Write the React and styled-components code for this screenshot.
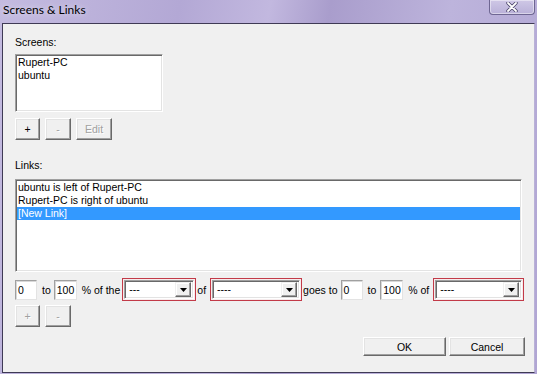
import React from "react";
import styled, { createGlobalStyle } from "styled-components";

const GlobalStyle = createGlobalStyle`
  html, body {
    margin: 0;
    padding: 0;
  }
  body {
    width: 537px;
    height: 374px;
    overflow: hidden;
    background: #b7aed6;
  }
`;

const Window = styled.div`
  width: 537px;
  height: 374px;
  display: flex;
  flex-direction: column;
  box-sizing: border-box;
  background: linear-gradient(
    100deg,
    #c4bbe0 0%,
    #b3a8d5 30%,
    #c2b8df 45%,
    #a99dcc 55%,
    #bdb4dc 75%,
    #b0a5d3 100%
  );
  font-family: "Liberation Sans", Arial, sans-serif;
  font-size: 10.5px;
  color: #000;
`;

const TitleBar = styled.div`
  height: 23px;
  display: flex;
  justify-content: space-between;
  align-items: flex-start;
  flex-shrink: 0;
`;

const Title = styled.div`
  padding: 3px 0 0 3px;
  font-family: Lato, "Liberation Sans", sans-serif;
  font-size: 12px;
  line-height: 14px;
  text-shadow: 0 0 6px rgba(255, 255, 255, 0.7);
`;

const CloseButton = styled.div`
  width: 46px;
  height: 15px;
  margin-right: 2px;
  box-sizing: border-box;
  border: 1px solid #6e6692;
  border-top: none;
  border-radius: 0 0 4px 4px;
  background: linear-gradient(#cfc8e6, #b9b0d8);
  box-shadow: inset 0 0 0 1px rgba(255, 255, 255, 0.45);
  display: flex;
  align-items: center;
  justify-content: center;
`;

const Client = styled.div`
  flex: 1;
  margin: 0 2px 1px 2px;
  background: #f0f0f0;
  border: 1px solid;
  border-color: #3f3a55 #b9b1d6 #3f3a55 #3f3a55;
  padding: 12px 9px 0 12px;
  display: flex;
  flex-direction: column;
  align-items: flex-start;
`;

const Label = styled.div`
  height: 12px;
  line-height: 12px;
  margin-top: ${({ $mt }) => $mt || 0}px;
`;

const ListBox = styled.div`
  width: ${({ $w }) => $w}px;
  height: ${({ $h }) => $h}px;
  margin-top: ${({ $mt }) => $mt}px;
  box-sizing: border-box;
  background: #fff;
  border: 1px solid;
  border-color: #a0a0a0 #fff #fff #a0a0a0;
  box-shadow: inset 1px 1px #696969, inset -1px -1px #e3e3e3;
  padding: 1px;
`;

const Row = styled.div`
  height: 13px;
  line-height: 13px;
  padding-left: 1px;
  white-space: nowrap;
  background: ${({ $selected }) => ($selected ? "#3399ff" : "transparent")};
  color: ${({ $selected }) => ($selected ? "#fff" : "#000")};
`;

const ButtonRow = styled.div`
  display: flex;
  gap: 5px;
  margin-top: ${({ $mt }) => $mt}px;
`;

const Button = styled.div`
  width: ${({ $w }) => $w}px;
  height: ${({ $h }) => $h || 22}px;
  box-sizing: border-box;
  background: #f0f0f0;
  border: 1px solid;
  border-color: #fff #696969 #696969 #fff;
  box-shadow: inset -1px -1px #a0a0a0, inset 1px 1px #e3e3e3;
  display: flex;
  align-items: center;
  justify-content: center;
  color: ${({ $disabled }) => ($disabled ? "#a0a0a0" : "#000")};
  text-shadow: ${({ $disabled }) => ($disabled ? "1px 1px #fff" : "none")};
`;

const ControlRow = styled.div`
  display: flex;
  align-items: center;
  height: 23px;
  margin-top: 6px;
`;

const TextBox = styled.div`
  width: ${({ $w }) => $w}px;
  height: 20px;
  box-sizing: border-box;
  background: #fff;
  border: 1px solid;
  border-color: #a0a0a0 #e3e3e3 #e3e3e3 #a0a0a0;
  box-shadow: inset 1px 1px #d8d8d8;
  padding-left: 2px;
  line-height: 18px;
`;

const Text = styled.span`
  white-space: nowrap;
  margin: 0 ${({ $r }) => $r}px 0 ${({ $l }) => $l}px;
`;

const ComboFrame = styled.div`
  width: ${({ $w }) => $w}px;
  height: 23px;
  box-sizing: border-box;
  border: 1px solid #c23a48;
  padding: 1px;
  background: #f6eced;
`;

const ComboField = styled.div`
  height: 100%;
  box-sizing: border-box;
  display: flex;
  align-items: center;
  background: #fff;
  border: 1px solid;
  border-color: #a0a0a0 #fff #fff #a0a0a0;
  box-shadow: inset 1px 1px #696969, inset -1px -1px #e3e3e3;
  padding: 2px;
`;

const ComboText = styled.div`
  flex: 1;
  padding-left: 2px;
  line-height: 13px;
`;

const ArrowButton = styled.div`
  width: 16px;
  height: 15px;
  box-sizing: border-box;
  background: #f0f0f0;
  border: 1px solid;
  border-color: #f0f0f0 #696969 #696969 #f0f0f0;
  box-shadow: inset -1px -1px #a0a0a0, inset 1px 1px #fff;
  display: flex;
  align-items: center;
  justify-content: center;
`;

const Footer = styled.div`
  align-self: stretch;
  display: flex;
  justify-content: flex-end;
  gap: 3px;
  margin-top: 10px;
`;

const Combo = ({ width, value }) => (
  <ComboFrame $w={width}>
    <ComboField>
      <ComboText>{value}</ComboText>
      <ArrowButton>
        <svg width="7" height="4" viewBox="0 0 7 4">
          <polygon points="0,0 7,0 3.5,4" fill="#000" />
        </svg>
      </ArrowButton>
    </ComboField>
  </ComboFrame>
);

const screens = ["Rupert-PC", "ubuntu"];
const links = ["ubuntu is left of Rupert-PC", "Rupert-PC is right of ubuntu", "[New Link]"];

export default function App() {
  return (
    <Window>
      <GlobalStyle />
      <TitleBar>
        <Title>Screens &amp; Links</Title>
        <CloseButton>
          <svg width="12" height="10" viewBox="0 0 12 10">
            <path d="M2 1 L10 9 M10 1 L2 9" stroke="#4a4468" strokeWidth="3.4" strokeLinecap="round" />
            <path d="M2 1 L10 9 M10 1 L2 9" stroke="#fff" strokeWidth="1.8" strokeLinecap="round" />
          </svg>
        </CloseButton>
      </TitleBar>
      <Client>
        <Label>Screens:</Label>
        <ListBox $w={148} $h={58} $mt={6}>
          {screens.map((s) => (
            <Row key={s}>{s}</Row>
          ))}
        </ListBox>
        <ButtonRow $mt={6}>
          <Button $w={25}>+</Button>
          <Button $w={26} $disabled>
            -
          </Button>
          <Button $w={36} $disabled>
            Edit
          </Button>
        </ButtonRow>
        <Label $mt={19}>Links:</Label>
        <ListBox $w={507} $h={93} $mt={8}>
          {links.map((l, i) => (
            <Row key={l} $selected={i === links.length - 1}>
              {l}
            </Row>
          ))}
        </ListBox>
        <ControlRow>
          <TextBox $w={22}>0</TextBox>
          <Text $l={5} $r={3}>to</Text>
          <TextBox $w={23}>100</TextBox>
          <Text $l={5} $r={2}>% of the</Text>
          <Combo width={74} value="---" />
          <Text $l={1} $r={4}>of</Text>
          <Combo width={92} value="----" />
          <Text $l={1} $r={3}>goes to</Text>
          <TextBox $w={22}>0</TextBox>
          <Text $l={5} $r={4}>to</Text>
          <TextBox $w={23}>100</TextBox>
          <Text $l={5} $r={4}>% of</Text>
          <Combo width={91} value="----" />
        </ControlRow>
        <ButtonRow $mt={4}>
          <Button $w={25} $disabled>
            +
          </Button>
          <Button $w={26} $disabled>
            -
          </Button>
        </ButtonRow>
        <Footer>
          <Button $w={83} $h={19}>
            OK
          </Button>
          <Button $w={76} $h={19}>
            Cancel
          </Button>
        </Footer>
      </Client>
    </Window>
  );
}
